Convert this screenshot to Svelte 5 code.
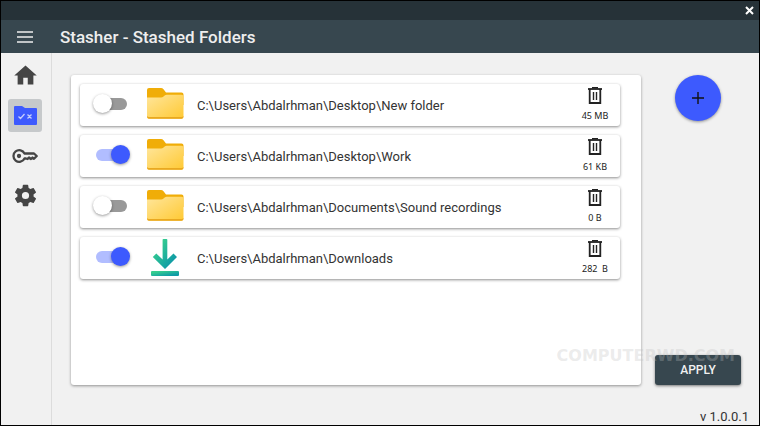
<script>
    let folders = $state([
        { id: 1, path: 'C:\\Users\\Abdalrhman\\Desktop\\New folder', size: '45 MB', icon: 'folder', stashed: false },
        { id: 2, path: 'C:\\Users\\Abdalrhman\\Desktop\\Work', size: '61 KB', icon: 'folder', stashed: true },
        { id: 3, path: 'C:\\Users\\Abdalrhman\\Documents\\Sound recordings', size: '0 B', icon: 'folder', stashed: false },
        { id: 4, path: 'C:\\Users\\Abdalrhman\\Downloads', size: '282  B', icon: 'download', stashed: true }
    ]);

    let page = $state('folders');

    function removeFolder(id) {
        folders = folders.filter((f) => f.id !== id);
    }
</script>

<div class="window">
    <div class="titlebar">
        <button class="close" aria-label="Close">
            <svg width="9" height="9" viewBox="0 0 9 9">
                <path d="M1 1l7 7M8 1L1 8" stroke="#fff" stroke-width="2" />
            </svg>
        </button>
    </div>

    <header>
        <button class="menu" aria-label="Menu">
            <svg width="16" height="14" viewBox="0 0 16 14">
                <path d="M0 2h16M0 7h16M0 12h16" stroke="#eee" stroke-width="1.700" />
            </svg>
        </button>
        <h1>Stasher - Stashed Folders</h1>
    </header>

    <div class="body">
        <nav>
            <button class:active={page === 'home'} onclick={() => (page = 'home')} aria-label="Home">
                <svg width="27" height="27" viewBox="0 0 24 24" fill="#454545">
                    <path d="M10 20v-6h4v6h5v-8h3L12 3 2 12h3v8z" />
                </svg>
            </button>
            <button class:active={page === 'folders'} onclick={() => (page = 'folders')} aria-label="Stashed folders">
                <svg width="23" height="19" viewBox="0 0 23 19">
                    <path d="M0 1Q0 0 1 0h7l3 2h11q1 0 1 1v15q0 1-1 1H1q-1 0-1-1z" fill="#3d5afe" />
                    <path d="M4.500 10.500l2 2 4-4.500M13.500 8.500l4 4M17.500 8.500l-4 4" fill="none" stroke="#c5cdfc" stroke-width="1.300" />
                </svg>
            </button>
            <button class:active={page === 'key'} onclick={() => (page = 'key')} aria-label="Password">
                <svg width="26" height="14" viewBox="0 0 26 14" fill="none" stroke="#454545" stroke-width="2.300" stroke-linejoin="round">
                    <path d="M12.500 4.500H22L24.700 7l-2.700 2.800-1.500-1.300-1.500 1.500-2-1.500-1.500 1.500-1.500-.5h-1.500a5.800 5.800 0 1 1 0-5z" />
                    <circle cx="7" cy="7" r="1" />
                </svg>
            </button>
            <button class:active={page === 'settings'} onclick={() => (page = 'settings')} aria-label="Settings">
                <svg width="27" height="27" viewBox="0 0 24 24" fill="#454545">
                    <path d="M19.140 12.940c.04-.3.06-.61.06-.94s-.02-.64-.07-.94l2.030-1.580a.49.49 0 0 0 .12-.61l-1.920-3.320a.49.49 0 0 0-.59-.22l-2.390.96a7 7 0 0 0-1.620-.94l-.36-2.540a.48.48 0 0 0-.48-.41h-3.840a.48.48 0 0 0-.47.41l-.36 2.540a7.300 7.300 0 0 0-1.620.94l-2.390-.96a.48.48 0 0 0-.59.22L2.740 8.870a.48.48 0 0 0 .12.610l2.030 1.580a6 6 0 0 0 0 1.880l-2.030 1.580a.49.49 0 0 0-.12.610l1.920 3.320c.12.220.37.290.59.220l2.390-.96c.5.380 1.030.7 1.620.94l.36 2.540c.05.240.24.410.48.410h3.840c.24 0 .44-.17.47-.41l.36-2.540a7.300 7.300 0 0 0 1.620-.94l2.390.96c.22.080.47 0 .59-.22l1.920-3.320a.48.48 0 0 0-.12-.61zM12 15.200a3.200 3.200 0 1 1 0-6.400 3.200 3.200 0 0 1 0 6.400z" />
                </svg>
            </button>
        </nav>

        <main>
            <ul class="panel">
                {#each folders as folder (folder.id)}
                    <li>
                        <input type="checkbox" class="toggle" bind:checked={folder.stashed} aria-label={folder.path} />

                        {#if folder.icon === 'folder'}
                            <svg class="icon" width="37" height="38" viewBox="0 0 37 38">
                                <defs>
                                    <linearGradient id="paper{folder.id}" x1="0" y1="0" x2="1" y2="1">
                                        <stop offset="0" stop-color="#ffe69c" />
                                        <stop offset="1" stop-color="#ffc933" />
                                    </linearGradient>
                                </defs>
                                <path d="M0 5q0-2 2-2h12q1.500 0 2.500 1.300L19 7.500h15.500q2 0 2 2V20H0z" fill="#f0ad08" />
                                <path d="M0 12.500h14q1.500 0 2.500-1l1.500-1.200q.7-.6 1.700-.6h14.800q2 0 2 2v20q0 2-2 2H2q-2 0-2-2z" fill="url(#paper{folder.id})" />
                                <path d="M0 31q0 2.800 2 2.800h32.500q2 0 2-2.800-.5 1-2 1H2q-1.500 0-2-1z" fill="#e9a820" />
                            </svg>
                        {:else}
                            <svg class="icon" width="37" height="38" viewBox="0 0 37 38">
                                <defs>
                                    <linearGradient id="arrow" x1="0" y1="0" x2="1" y2="1">
                                        <stop offset="0.200" stop-color="#35cd8f" />
                                        <stop offset="0.800" stop-color="#109ba6" />
                                    </linearGradient>
                                </defs>
                                <path d="M16.500 1h3q.8 0 .8.800v19.700l6.200-6 3.500 3.500L18 31 5.800 19l3.500-3.500 6.300 6V1.800q0-.8.900-.8z" fill="url(#arrow)" />
                                <rect x="4" y="33" width="28" height="5" rx="1" fill="url(#arrow)" />
                            </svg>
                        {/if}

                        <span class="path">{folder.path}</span>

                        <div class="side">
                            <button class="trash" onclick={() => removeFolder(folder.id)} aria-label="Remove folder">
                                <svg width="14" height="17" viewBox="0 0 14 17" fill="none" stroke="#222">
                                    <path d="M0 2h14" stroke-width="1.800" />
                                    <path d="M4 .7h6" stroke-width="1.400" />
                                    <path d="M1.700 2v14h10.600V2" stroke-width="1.800" />
                                    <path d="M5.500 5v8M8.500 5v8" stroke-width="1.400" />
                                </svg>
                            </button>
                            <span class="size">{folder.size}</span>
                        </div>
                    </li>
                {/each}
            </ul>

            <div class="actions">
                <button class="add" aria-label="Add folder">
                    <svg width="12" height="12" viewBox="0 0 12 12">
                        <path d="M6 0v12M0 6h12" stroke="#111" stroke-width="1.400" />
                    </svg>
                </button>
                <button class="apply">APPLY</button>
            </div>

            <footer>v 1.0.0.1</footer>
        </main>
    </div>

    <div class="watermark">COMPUTERWD.COM</div>
</div>

<style>
    :global(body) {
        margin: 0;
        font-family: Roboto, "Liberation Sans", sans-serif;
    }

    .window {
        position: relative;
        display: flex;
        flex-direction: column;
        box-sizing: border-box;
        min-height: 100vh;
        border: 1px solid #000;
        background: #f1f1f1;
        color: #333;
    }

    button {
        display: flex;
        align-items: center;
        justify-content: center;
        padding: 0;
        border: none;
        background: none;
        font-family: inherit;
        cursor: pointer;
    }

    .titlebar {
        display: flex;
        justify-content: flex-end;
        height: 19px;
        padding-right: 5px;
        background: #263238;
    }

    .close {
        width: 9px;
    }

    header {
        display: flex;
        align-items: center;
        height: 33px;
        background: #37474f;
    }

    .menu {
        width: 48px;
        height: 33px;
    }

    h1 {
        margin: 0 0 0 11px;
        color: #eee;
        font-size: 17px;
        font-weight: 500;
        line-height: 20px;
    }

    .body {
        display: flex;
        flex: 1;
    }

    nav {
        display: flex;
        flex-direction: column;
        gap: 7px;
        width: 36px;
        padding: 6px 7px;
        border-right: 1px solid #dcdcdc;
    }

    nav button {
        width: 34px;
        height: 33px;
        border-radius: 3px;
    }

    nav button.active {
        background: #c6c9cb;
    }

    main {
        display: grid;
        flex: 1;
        grid-template-columns: 1fr 86px;
        grid-template-rows: 1fr 40px;
        column-gap: 14px;
        padding: 22px 18px 0 19px;
    }

    .panel {
        display: flex;
        flex-direction: column;
        gap: 9px;
        margin: 0;
        padding: 9px 21px 9px 9px;
        border-radius: 3px;
        background: #fff;
        box-shadow: 0 1px 3px rgba(0, 0, 0, 0.4);
        list-style: none;
    }

    li {
        display: flex;
        align-items: center;
        height: 42px;
        padding-left: 16px;
        border-radius: 3px;
        box-shadow: 0 1px 3px rgba(0, 0, 0, 0.45);
    }

    .toggle {
        position: relative;
        width: 31px;
        height: 12px;
        margin: 0 20px 2px 0;
        border-radius: 6px;
        appearance: none;
        background: #999;
        cursor: pointer;
    }

    .toggle::before {
        position: absolute;
        top: -4px;
        left: -3px;
        width: 19px;
        height: 19px;
        border-radius: 50%;
        background: #fff;
        box-shadow: 0 1px 3px rgba(0, 0, 0, 0.4);
        content: "";
    }

    .toggle:checked {
        background: #b1bdff;
    }

    .toggle:checked::before {
        left: 15px;
        background: #3d5afe;
    }

    .icon {
        flex: none;
        margin-bottom: 2px;
    }

    .path {
        flex: 1;
        padding: 2px 0 0 13px;
        font-size: 13px;
        line-height: 18px;
    }

    .side {
        display: flex;
        flex-direction: column;
        align-items: center;
        gap: 6px;
        width: 50px;
        padding-bottom: 2px;
    }

    .size {
        color: #222;
        font-family: "Noto Sans", sans-serif;
        font-size: 9px;
        line-height: 12px;
        white-space: pre;
    }

    .actions {
        display: flex;
        flex-direction: column;
        align-items: center;
        justify-content: space-between;
    }

    .add {
        width: 46px;
        height: 46px;
        border-radius: 50%;
        background: #3d5afe;
        box-shadow: 0 1px 3px rgba(0, 0, 0, 0.4);
    }

    .apply {
        width: 86px;
        height: 30px;
        border-radius: 3px;
        background: #37474f;
        box-shadow: 0 1px 3px rgba(0, 0, 0, 0.5);
        color: #f1f1f1;
        font-size: 12px;
        font-weight: 500;
        line-height: 12px;
    }

    footer {
        grid-column: 1 / -1;
        align-self: end;
        margin-right: -8px;
        font-size: 13px;
        line-height: 16px;
        text-align: right;
    }

    .watermark {
        position: absolute;
        right: 24px;
        bottom: 63px;
        color: rgba(190, 190, 190, 0.3);
        font-family: "DejaVu Sans", sans-serif;
        font-size: 16px;
        font-weight: bold;
        line-height: 12px;
        pointer-events: none;
    }
</style>
